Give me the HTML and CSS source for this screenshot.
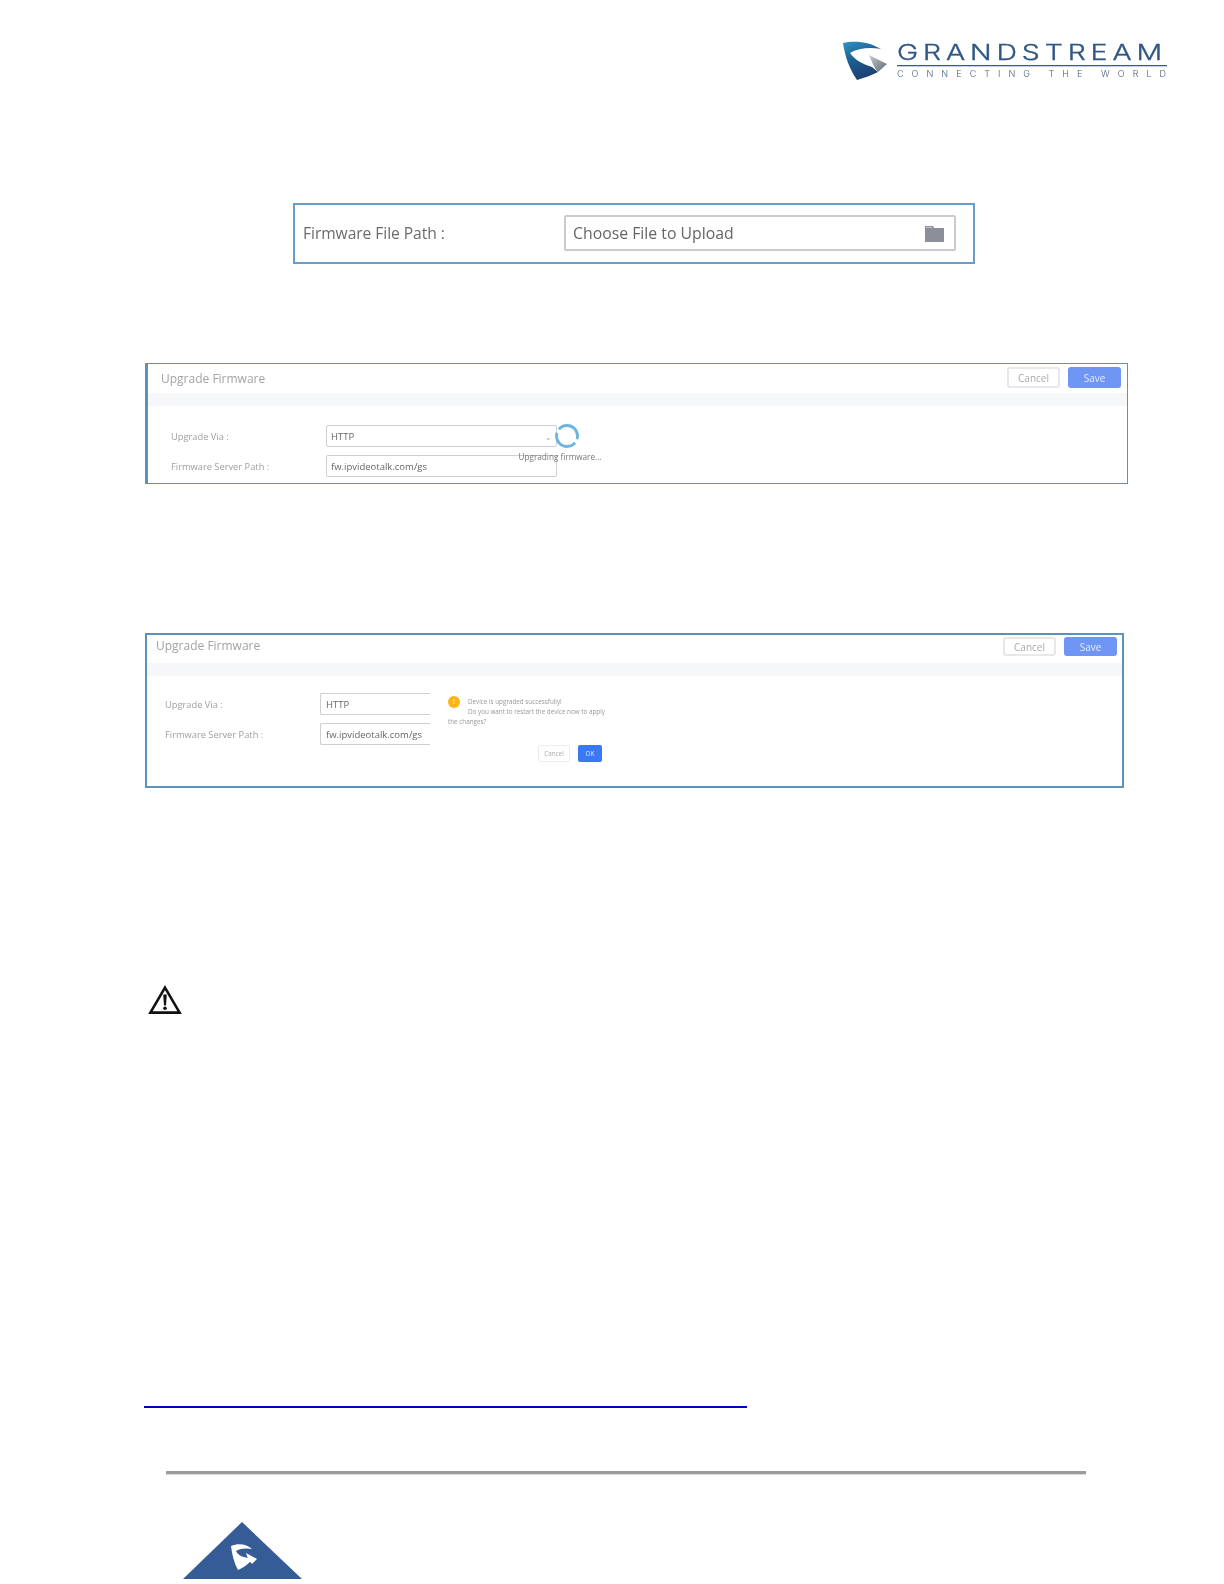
FILE: index.html
```html
<!DOCTYPE html>
<html lang="en">
<head>
<meta charset="utf-8">
<title>Upgrade Firmware</title>
<link rel="stylesheet" href="styles.css">
</head>
<body>
<div class="page">
  <header class="logo-row">
    <svg class="logo" viewBox="843 41 324 40" width="324" height="40">
      <defs>
        <linearGradient id="blue" x1="0.1" y1="0" x2="0.5" y2="1">
          <stop offset="0" stop-color="#2f8fc0"/>
          <stop offset="0.45" stop-color="#1d5f96"/>
          <stop offset="1" stop-color="#1c3f6e"/>
        </linearGradient>
        <linearGradient id="grey" x1="0" y1="0" x2="1" y2="1">
          <stop offset="0" stop-color="#c9ccd0"/>
          <stop offset="1" stop-color="#5f6670"/>
        </linearGradient>
      </defs>
      <path fill="url(#blue)" d="M843 43C855 40 870 42 881 49C870 47 858 48 850 53C855 60 862 64 872 67L878 72C872 75 864 78 857 80C850 70 845 57 843 43Z"/>
      <path fill="url(#grey)" d="M869 55L887 64L878 72C874 68 872 62 869 55Z"/>
      <text class="logo-name" x="897" y="59.5" textLength="270" lengthAdjust="spacingAndGlyphs">GRANDSTREAM</text>
      <rect x="897" y="65" width="270" height="1.3" fill="#3f5d84"/>
      <text class="logo-tag" x="897" y="77" textLength="269" lengthAdjust="spacing">CONNECTING THE WORLD</text>
    </svg>
  </header>

  <section class="file-box">
    <span class="file-label">Firmware File Path :</span>
    <div class="file-input">
      <span>Choose File to Upload</span>
      <svg class="folder" viewBox="0 0 19 17" width="19" height="17">
        <path fill="#8a8f99" d="M0 1h8l1 2h10v14H0z"/>
        <rect x="1" y="2" width="6" height="1" fill="#c4c7cc"/>
      </svg>
    </div>
  </section>

  <section class="panel panel-a">
    <div class="panel-head">
      <span class="panel-title">Upgrade Firmware</span>
      <div class="panel-actions">
        <span class="btn btn-cancel">Cancel</span>
        <span class="btn btn-save">Save</span>
      </div>
    </div>
    <div class="panel-band"></div>
    <div class="panel-form">
      <div class="form-row">
        <span class="form-label">Upgrade Via :</span>
        <div class="form-input form-input-wide">HTTP<span class="chevron">&#8964;</span></div>
      </div>
      <div class="form-row">
        <span class="form-label">Firmware Server Path :</span>
        <div class="form-input form-input-wide">fw.ipvideotalk.com/gs</div>
      </div>
    </div>
    <div class="loader">
      <svg class="spinner" viewBox="0 0 26 26" width="26" height="26">
        <circle class="spin-arc" cx="13" cy="13" r="10.5" pathLength="100" stroke-dasharray="44 6 44 6" stroke-dashoffset="-11"/>
      </svg>
      <span class="loader-text">Upgrading firmware...</span>
    </div>
  </section>

  <section class="panel panel-b">
    <div class="panel-head">
      <span class="panel-title">Upgrade Firmware</span>
      <div class="panel-actions">
        <span class="btn btn-cancel">Cancel</span>
        <span class="btn btn-save">Save</span>
      </div>
    </div>
    <div class="panel-band"></div>
    <div class="panel-form">
      <div class="form-row">
        <span class="form-label">Upgrade Via :</span>
        <div class="form-input form-input-cut">HTTP</div>
      </div>
      <div class="form-row">
        <span class="form-label">Firmware Server Path :</span>
        <div class="form-input form-input-cut">fw.ipvideotalk.com/gs</div>
      </div>
    </div>
    <div class="dialog">
      <p class="dialog-line"><span class="dialog-icon">!</span>Device is upgraded successfully!</p>
      <p class="dialog-line dialog-indent">Do you want to restart the device now to apply</p>
      <p class="dialog-line">the changes?</p>
      <div class="dialog-actions">
        <span class="dialog-btn dialog-cancel">Cancel</span>
        <span class="dialog-btn dialog-ok">OK</span>
      </div>
    </div>
  </section>

  <svg class="warning" viewBox="0 0 34 30" width="34" height="30">
    <path d="M17 2.6L31.6 27.6H2.4Z" fill="none" stroke="#111" stroke-width="2.6" stroke-linejoin="miter"/>
    <path d="M15.2 9.5h3.6l-.8 11h-2z" fill="#111"/>
    <circle cx="17" cy="23.2" r="1.8" fill="#111"/>
  </svg>

  <div class="link-line"></div>
  <div class="rule"></div>

  <svg class="corner" viewBox="183 1522 119 57" width="119" height="57">
    <path d="M242 1522L302 1579H183Z" fill="#355c96"/>
    <path fill="#fff" d="M231 1546C238 1543 247 1544 252 1549C247 1548 240 1548 236 1551C238 1555 242 1557 248 1558L251 1561C247 1565 243 1568 238 1570C234 1563 232 1554 231 1546Z"/>
    <path fill="#fff" d="M246 1553L257 1559L252 1564C249 1561 247 1557 246 1553Z"/>
  </svg>
</div>
</body>
</html>
```

FILE: styles.css
```css
* { box-sizing: border-box; }
html, body { margin: 0; padding: 0; background: #fff; }
.page {
  width: 1224px;
  height: 1584px;
  overflow: hidden;
  display: flex;
  flex-direction: column;
  font-family: "Open Sans", "Liberation Sans", sans-serif;
}

/* logo */
.logo-row {
  display: flex;
  justify-content: flex-end;
  padding: 41px 57px 0 0;
  height: 81px;
  flex: none;
}
.logo {
  overflow: visible;
  filter: blur(0.3px);
}
.logo-name {
  font-family: "Inter", "Liberation Sans", sans-serif;
  font-size: 21px;
  font-weight: 300;
  letter-spacing: 3.6px;
  fill: #2f5684;
  stroke: #2f5684;
  stroke-width: 0.35px;
}
.logo-tag {
  font-family: "Inter", "Liberation Sans", sans-serif;
  font-size: 9px;
  font-weight: 300;
  fill: #46607f;
}

/* first figure */
.file-box {
  flex: none;
  margin: 122px 0 0 293px;
  width: 682px;
  height: 61px;
  border: 2px solid #6a9ccb;
  display: flex;
  align-items: center;
  padding: 0 17px 1px 8px;
  filter: blur(0.4px);
}
.file-label {
  width: 261px;
  font-size: 15.6px;
  letter-spacing: -0.05px;
  color: #6b6b6b;
}
.file-input {
  flex: 1;
  height: 36px;
  border: 2px solid #cbcbcb;
  border-radius: 2px;
  display: flex;
  align-items: center;
  justify-content: space-between;
  padding: 0 10px 0 7px;
  font-size: 15.8px;
  color: #666;
}
.folder { flex: none; }

/* panels */
.panel {
  flex: none;
  position: relative;
  display: flex;
  flex-direction: column;
  background: #fff;
  filter: blur(0.7px);
  overflow: hidden;
}
.panel-a {
  margin: 99px 0 0 145px;
  width: 983px;
  height: 121px;
  border: 1px solid #5b93bf;
  border-left-width: 3px;
}
.panel-b {
  margin: 149px 0 0 145px;
  width: 979px;
  height: 155px;
  border: 2px solid #5b93bf;
}
.panel-head {
  flex: none;
  height: 29px;
  display: flex;
  align-items: center;
  justify-content: space-between;
  padding: 0 6px 0 13px;
}
.panel-a .panel-actions { margin-top: -2px; }
.panel-b .panel-actions { margin-top: 3px; }
.panel-b .panel-head {
  height: 28px;
  padding: 0 5px 8px 9px;
}
.panel-title {
  font-size: 12px;
  color: #a3a3a3;
}
.panel-actions {
  display: flex;
  gap: 8px;
}
.btn {
  width: 53px;
  height: 21px;
  border-radius: 3px;
  display: flex;
  align-items: center;
  justify-content: center;
  font-size: 10px;
}
.panel-b .btn { height: 19px; }
.btn-cancel {
  border: 2px solid #e6e8ea;
  color: #aaa;
}
.btn-save {
  background: #6f96f5;
  color: #e4ecff;
}
.panel-band {
  flex: none;
  height: 13px;
  background: #f5f7f9;
}
.panel-form {
  display: flex;
  flex-direction: column;
  gap: 8px;
  padding: 19px 0 0 23px;
}
.panel-b .panel-form {
  padding: 17px 0 0 18px;
}
.form-row {
  display: flex;
  align-items: center;
  height: 22px;
}
.form-label {
  width: 155px;
  font-size: 9.3px;
  color: #a0a0a0;
}
.form-input {
  height: 22px;
  border: 1px solid #cfcfcf;
  border-radius: 2px;
  display: flex;
  align-items: center;
  justify-content: space-between;
  padding: 0 4px;
  font-size: 9.5px;
  color: #666;
}
.panel-b .form-input { padding-left: 5px; }
.form-input-wide { width: 231px; }
.form-input-cut {
  width: 110px;
  border-right: 0;
  border-radius: 2px 0 0 2px;
}
.chevron {
  font-size: 8px;
  color: #aaa;
}

/* loader overlay */
.loader {
  position: absolute;
  left: 371px;
  top: 59px;
  width: 82px;
  display: flex;
  flex-direction: column;
  align-items: center;
}
.spinner {
  position: relative;
  left: 7px;
}
.spin-arc {
  fill: none;
  stroke: #6db5de;
  stroke-width: 2.8;
}
.loader-text {
  margin-top: 2px;
  font-size: 8.2px;
  color: #777;
  white-space: nowrap;
}

/* success dialog overlay */
.dialog {
  position: absolute;
  left: 283px;
  top: 51px;
  width: 175px;
  height: 92px;
  background: #fff;
  padding: 10px 3px 0 18px;
  font-size: 6.3px;
  color: #999;
}
.dialog-line {
  margin: 0;
  height: 10.5px;
  line-height: 10.5px;
  white-space: nowrap;
}
.dialog-icon {
  display: inline-flex;
  align-items: center;
  justify-content: center;
  width: 12px;
  height: 12px;
  margin-right: 8px;
  border-radius: 50%;
  background: #fbb514;
  color: #fff;
  font-size: 7px;
  vertical-align: middle;
}
.dialog-indent { padding-left: 20px; }
.dialog-actions {
  display: flex;
  justify-content: flex-end;
  gap: 8px;
  margin-top: 17px;
}
.dialog-btn {
  height: 17px;
  border-radius: 2px;
  display: flex;
  align-items: center;
  justify-content: center;
}
.dialog-cancel {
  width: 32px;
  border: 1px solid #eceef0;
  color: #aaa;
}
.dialog-ok {
  width: 24px;
  background: #3b78f5;
  color: #e8efff;
}

/* lower page */
.warning {
  flex: none;
  margin: 197px 0 0 148px;
  display: block;
}
.link-line {
  flex: none;
  margin: 391px 0 0 144px;
  width: 603px;
  height: 2px;
  background: #0000cc;
}
.rule {
  flex: none;
  margin: 63px 0 0 166px;
  width: 920px;
  height: 3px;
  background: #9a9a9a;
  box-shadow: 0 1px 1px #d8d8d8;
}
.corner {
  flex: none;
  margin: 48px 0 0 183px;
  display: block;
}
```
